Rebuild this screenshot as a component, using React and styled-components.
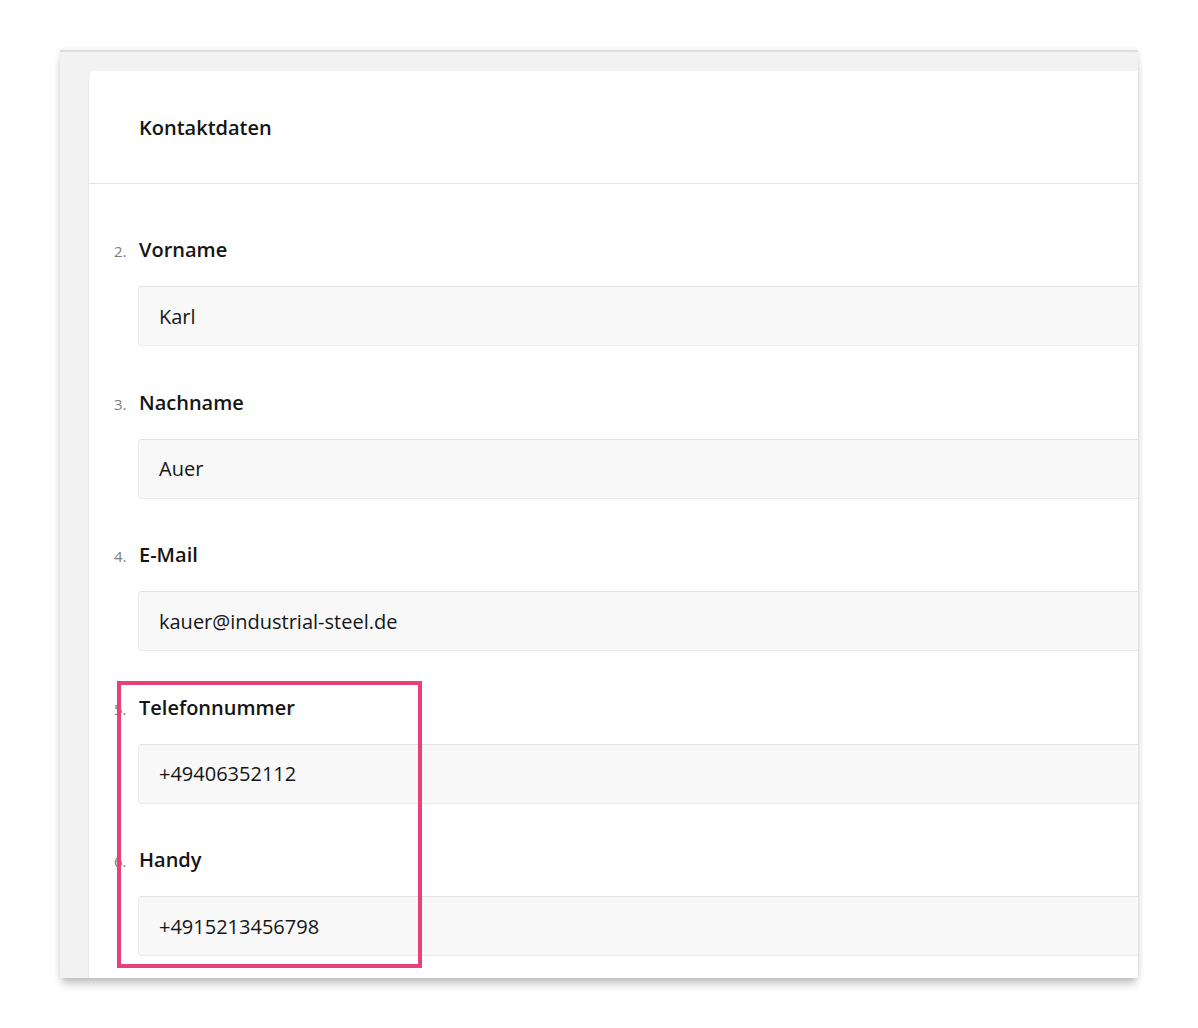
import React from "react";
import styled, { createGlobalStyle } from "styled-components";

const Global = createGlobalStyle`
  html, body { margin: 0; padding: 0; background: #ffffff; }
  body { font-family: "Open Sans", "Noto Sans", sans-serif; color: #1a1a1a; }
  * { box-sizing: border-box; }
`;

const Page = styled.div`
  position: relative;
  width: 1198px;
  height: 1028px;
  padding: 50px 0 0 60px;
`;

const Frame = styled.div`
  width: 1078px;
  height: 928px;
  background: #f2f2f2;
  border-top: 2px solid #dedede;
  padding: 19px 0 0 28px;
  overflow: hidden;
  box-shadow: 0 8px 8px -2px rgba(0, 0, 0, 0.22), -2px 0 6px rgba(0, 0, 0, 0.05), 2px 0 6px rgba(0, 0, 0, 0.06);
`;

const Card = styled.div`
  width: 1200px;
  height: 100%;
  background: #ffffff;
  border-top-left-radius: 6px;
  border-left: 1px solid #e9e9e9;
`;

const Header = styled.div`
  height: 113px;
  display: flex;
  align-items: center;
  padding-left: 50px;
  border-bottom: 1px solid #e5e5e5;
`;

const Title = styled.h2`
  margin: 0;
  font-size: 20px;
  font-weight: 600;
  color: #151515;
`;

const Form = styled.div`
  padding: 53px 0 0 25px;
`;

const Field = styled.div`
  margin-bottom: 43.5px;
`;

const LabelRow = styled.div`
  display: flex;
  align-items: baseline;
  height: 26px;
  line-height: 26px;
`;

const Num = styled.span`
  width: 25px;
  font-size: 15px;
  color: #7d7d7d;
`;

const Label = styled.label`
  font-size: 20px;
  font-weight: 600;
  color: #151515;
`;

const Input = styled.div`
  margin: 23px 0 0 24px;
  height: 60px;
  display: flex;
  align-items: center;
  padding-left: 20px;
  background: #f8f8f8;
  border: 1px solid #ececec;
  border-top-color: #e2e2e2;
  border-radius: 4px;
  font-size: 20px;
  color: #151515;
`;

const Highlight = styled.div`
  position: absolute;
  left: 117px;
  top: 681px;
  width: 305px;
  height: 287px;
  border: 4px solid #e8417a;
  pointer-events: none;
`;

const fields = [
  { n: "2.", label: "Vorname", value: "Karl" },
  { n: "3.", label: "Nachname", value: "Auer" },
  { n: "4.", label: "E-Mail", value: "kauer@industrial-steel.de" },
  { n: "5.", label: "Telefonnummer", value: "+49406352112" },
  { n: "6.", label: "Handy", value: "+4915213456798" },
];

export default function App() {
  return (
    <>
      <Global />
      <Page>
        <Frame>
          <Card>
            <Header>
              <Title>Kontaktdaten</Title>
            </Header>
            <Form>
              {fields.map((f) => (
                <Field key={f.n}>
                  <LabelRow>
                    <Num>{f.n}</Num>
                    <Label>{f.label}</Label>
                  </LabelRow>
                  <Input>{f.value}</Input>
                </Field>
              ))}
            </Form>
          </Card>
        </Frame>
        <Highlight />
      </Page>
    </>
  );
}
